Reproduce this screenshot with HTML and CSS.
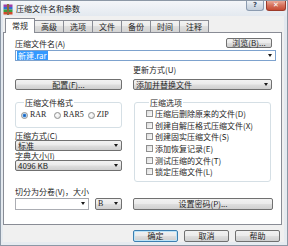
FILE: index.html
```html
<!DOCTYPE html>
<html lang="zh-CN">
<head>
    <meta charset="UTF-8">
    <title>压缩文件名和参数</title>
    <link rel="stylesheet" href="styles.css">
</head>
<body>
<div class="window">
    <div class="titlebar">
        <svg class="app-icon" width="10" height="11" viewBox="0 0 10 11">
            <rect x="0.5" y="0.5" width="9" height="2.5" fill="#9c3fa8"/>
            <rect x="0.5" y="3" width="9" height="2.5" fill="#2f6fd0"/>
            <rect x="0.5" y="5.5" width="9" height="2.5" fill="#3d9d3d"/>
            <rect x="0.5" y="8" width="9" height="2.5" fill="#d04a2a"/>
            <rect x="4" y="0" width="2" height="11" fill="#8a6a3a"/>
        </svg>
        <span class="title">压缩文件名和参数</span>
        <div class="caption-btns">
            <span class="cap-btn help">?</span>
            <span class="cap-btn close">✕</span>
        </div>
    </div>
    <div class="client">
        <div class="tabs">
            <span class="tab active">常规</span>
            <span class="tab">高级</span>
            <span class="tab">选项</span>
            <span class="tab">文件</span>
            <span class="tab">备份</span>
            <span class="tab">时间</span>
            <span class="tab">注释</span>
        </div>
        <div class="panel">
            <div class="name-row">
                <span class="label">压缩文件名(A)</span>
                <button class="btn browse">浏览(B)...</button>
            </div>
            <div class="combo edit focus"><span class="sel">新建.rar</span><span class="arrow"></span></div>
            <div class="cols">
                <div class="col-left">
                    <button class="btn config">配置(F)...</button>
                    <fieldset class="group fmt">
                        <legend>压缩文件格式</legend>
                        <div class="radios">
                            <label class="radio on"><span class="dot"></span>RAR</label>
                            <label class="radio"><span class="dot"></span>RAR5</label>
                            <label class="radio"><span class="dot"></span>ZIP</label>
                        </div>
                    </fieldset>
                    <div class="label field-label">压缩方式(C)</div>
                    <div class="combo list"><span>标准</span><span class="arrow"></span></div>
                    <div class="label field-label tight">字典大小(I)</div>
                    <div class="combo list"><span>4096 KB</span><span class="arrow"></span></div>
                </div>
                <div class="col-right">
                    <div class="label update-label">更新方式(U)</div>
                    <div class="combo list update"><span>添加并替换文件</span><span class="arrow"></span></div>
                    <fieldset class="group opts">
                        <legend>压缩选项</legend>
                        <label class="check"><span class="box"></span>压缩后删除原来的文件(D)</label>
                        <label class="check"><span class="box"></span>创建自解压格式压缩文件(X)</label>
                        <label class="check"><span class="box"></span>创建固实压缩文件(S)</label>
                        <label class="check"><span class="box"></span>添加恢复记录(E)</label>
                        <label class="check"><span class="box"></span>测试压缩的文件(T)</label>
                        <label class="check"><span class="box"></span>锁定压缩文件(L)</label>
                    </fieldset>
                </div>
            </div>
            <div class="cols split-row">
                <div>
                    <div class="label">切分为分卷(V)，大小</div>
                    <div class="split">
                        <div class="combo edit size"><span></span><span class="arrow"></span></div>
                        <div class="combo list unit"><span>B</span><span class="arrow"></span></div>
                    </div>
                </div>
                <button class="btn pwd">设置密码(P)...</button>
            </div>
        </div>
        <div class="dlg-btns">
            <button class="btn dlg default">确定</button>
            <button class="btn dlg">取消</button>
            <button class="btn dlg">帮助</button>
        </div>
    </div>
</div>
</body>
</html>
```

FILE: styles.css
```css
html, body {
    margin: 0;
    padding: 0;
}
body {
    width: 288px;
    height: 246px;
    overflow: hidden;
    font-family: "Noto Sans CJK SC", "Noto Sans", sans-serif;
    font-size: 8px;
    color: #1e1e1e;
    background: #e3e8ee;
}
.window {
    width: 288px;
    height: 246px;
    box-sizing: border-box;
    border: 1px solid #8c98a6;
    background: linear-gradient(#f4f6f9, #e2e8ef 16px, #e6ebf0);
    padding: 0 3px 3px 2px;
    display: flex;
    flex-direction: column;
}
.titlebar {
    height: 15px;
    display: flex;
    align-items: center;
    flex: 0 0 auto;
}
.app-icon {
    margin: 1px 3px 0 0;
    display: block;
}
.title {
    color: #1a1a1a;
    font-size: 8px;
    line-height: 9px;
}
.caption-btns {
    margin-left: auto;
    align-self: flex-start;
    display: flex;
    gap: 2px;
    margin-right: -2px;
}
.cap-btn {
    height: 10px;
    line-height: 9px;
    box-sizing: border-box;
    text-align: center;
    font-family: "DejaVu Sans", sans-serif;
    font-size: 7px;
    font-weight: bold;
    border-radius: 0 0 3px 3px;
}
.cap-btn.help {
    width: 18px;
    color: #3c4a5c;
    border: 1px solid #8b9bb0;
    border-top: none;
    background: linear-gradient(#edf2f7, #d3dce6 50%, #c3cfdc);
}
.cap-btn.close {
    width: 20px;
    color: #fff;
    border: 1px solid #9c3a2a;
    border-top: none;
    background: linear-gradient(#eaa897, #d5705a 50%, #c54a32);
}
.client {
    flex: 1;
    background: #f0f0f0;
    display: flex;
    flex-direction: column;
    padding: 2px 2px 0 0;
}
.tabs {
    display: flex;
    align-items: flex-end;
    height: 14px;
    padding-left: 2px;
}
.tab {
    height: 12px;
    line-height: 12px;
    box-sizing: border-box;
    padding: 0 6px;
    border: 1px solid #898c95;
    border-bottom: none;
    margin-right: -1px;
    background: linear-gradient(#f3f3f3, #ebebeb 50%, #dedede 50%, #d3d3d3);
}
.tab.active {
    height: 15px;
    line-height: 13px;
    margin-bottom: -1px;
    background: #fff;
    position: relative;
    z-index: 1;
}
.panel {
    height: 193px;
    box-sizing: border-box;
    background: #fff;
    border: 1px solid #898c95;
    padding: 5px 5px 0 11px;
}
.label {
    line-height: 9px;
    white-space: nowrap;
}
.name-row {
    display: flex;
    align-items: center;
    justify-content: space-between;
    height: 10px;
    padding-right: 4px;
}
.btn {
    font: inherit;
    color: #1e1e1e;
    box-sizing: border-box;
    height: 10px;
    line-height: 8px;
    padding: 0;
    border: 1px solid #707070;
    border-radius: 2px;
    background: linear-gradient(#f2f2f2, #ebebeb 45%, #dddddd 55%, #cfcfcf);
}
.browse {
    width: 46px;
}
.combo {
    box-sizing: border-box;
    height: 11px;
    display: flex;
    align-items: center;
    justify-content: space-between;
    padding: 0 3px 0 2px;
    line-height: 9px;
    white-space: nowrap;
}
.combo.edit {
    background: #fff;
    border: 1px solid #abadb3;
    border-top-color: #a2a5ab;
}
.combo.focus {
    margin-top: 2px;
    border-color: #7da2ce;
    padding-left: 1px;
}
.combo.list {
    border: 1px solid #707070;
    border-radius: 2px;
    background: linear-gradient(#f2f2f2, #ebebeb 45%, #dddddd 55%, #cfcfcf);
}
.sel {
    background: #3399ff;
    color: #fff;
    padding: 0 1px;
}
.arrow {
    width: 0;
    height: 0;
    border-left: 2.5px solid transparent;
    border-right: 2.5px solid transparent;
    border-top: 3px solid #1a1a1a;
}
.cols {
    display: grid;
    grid-template-columns: 107px 139px;
    column-gap: 11px;
}
.col-left,
.col-right {
    display: flex;
    flex-direction: column;
}
.config {
    margin-top: 18px;
    height: 11px;
    line-height: 9px;
}
.update-label {
    margin-top: 4px;
}
.update {
    margin-top: 5px;
}
.group {
    margin: 8px 0 0 0;
    padding: 0;
    border: 1px solid #d5dfe5;
    border-radius: 3px;
    min-width: 0;
}
.group legend {
    padding: 0 1px;
    margin-left: 3px;
    line-height: 9px;
}
.group.fmt {
    padding: 3px 0 7px 5px;
}
.radios {
    display: flex;
}
.radio {
    width: 35px;
    display: flex;
    align-items: center;
    gap: 2px;
    line-height: 10px;
    font-family: "Liberation Serif", serif;
}
.dot {
    width: 7px;
    height: 7px;
    box-sizing: border-box;
    border-radius: 50%;
    border: 1px solid #8e8f8f;
    background: radial-gradient(circle at 40% 40%, #fff, #dcdcdc);
}
.radio.on .dot {
    background: radial-gradient(circle, #1b5aa8 0, #3a8ae0 1.5px, #d9e8f8 2.2px, #f4f4f4 3px);
}
.field-label {
    margin-top: 3px;
}
.field-label.tight {
    margin-top: 0;
}
.group.opts {
    margin-left: 1px;
    margin-right: 1px;
    padding: 1px 0 3px 11px;
}
.check {
    display: flex;
    align-items: center;
    gap: 2px;
    height: 11.6px;
    white-space: nowrap;
}
.box {
    width: 7px;
    height: 7px;
    box-sizing: border-box;
    border: 1px solid #8f8f8f;
    background: linear-gradient(135deg, #dcdcdc, #fbfbfb);
}
.split-row {
    margin-top: 5px;
    align-items: end;
}
.split {
    display: flex;
    gap: 6px;
    margin-top: 2px;
}
.combo.size {
    width: 74px;
    height: 12px;
}
.combo.unit {
    width: 27px;
    height: 12px;
    font-family: "Liberation Serif", serif;
}
.pwd {
    height: 12px;
    width: 140px;
    line-height: 10px;
}
.dlg-btns {
    display: flex;
    justify-content: flex-end;
    gap: 6px;
    margin-top: 5px;
    padding-right: 2px;
}
.btn.dlg {
    width: 45px;
    height: 12px;
    line-height: 10px;
}
.btn.default {
    border-color: #3c7fb1;
    box-shadow: inset 0 0 0 1px #bde4f7;
}
```
